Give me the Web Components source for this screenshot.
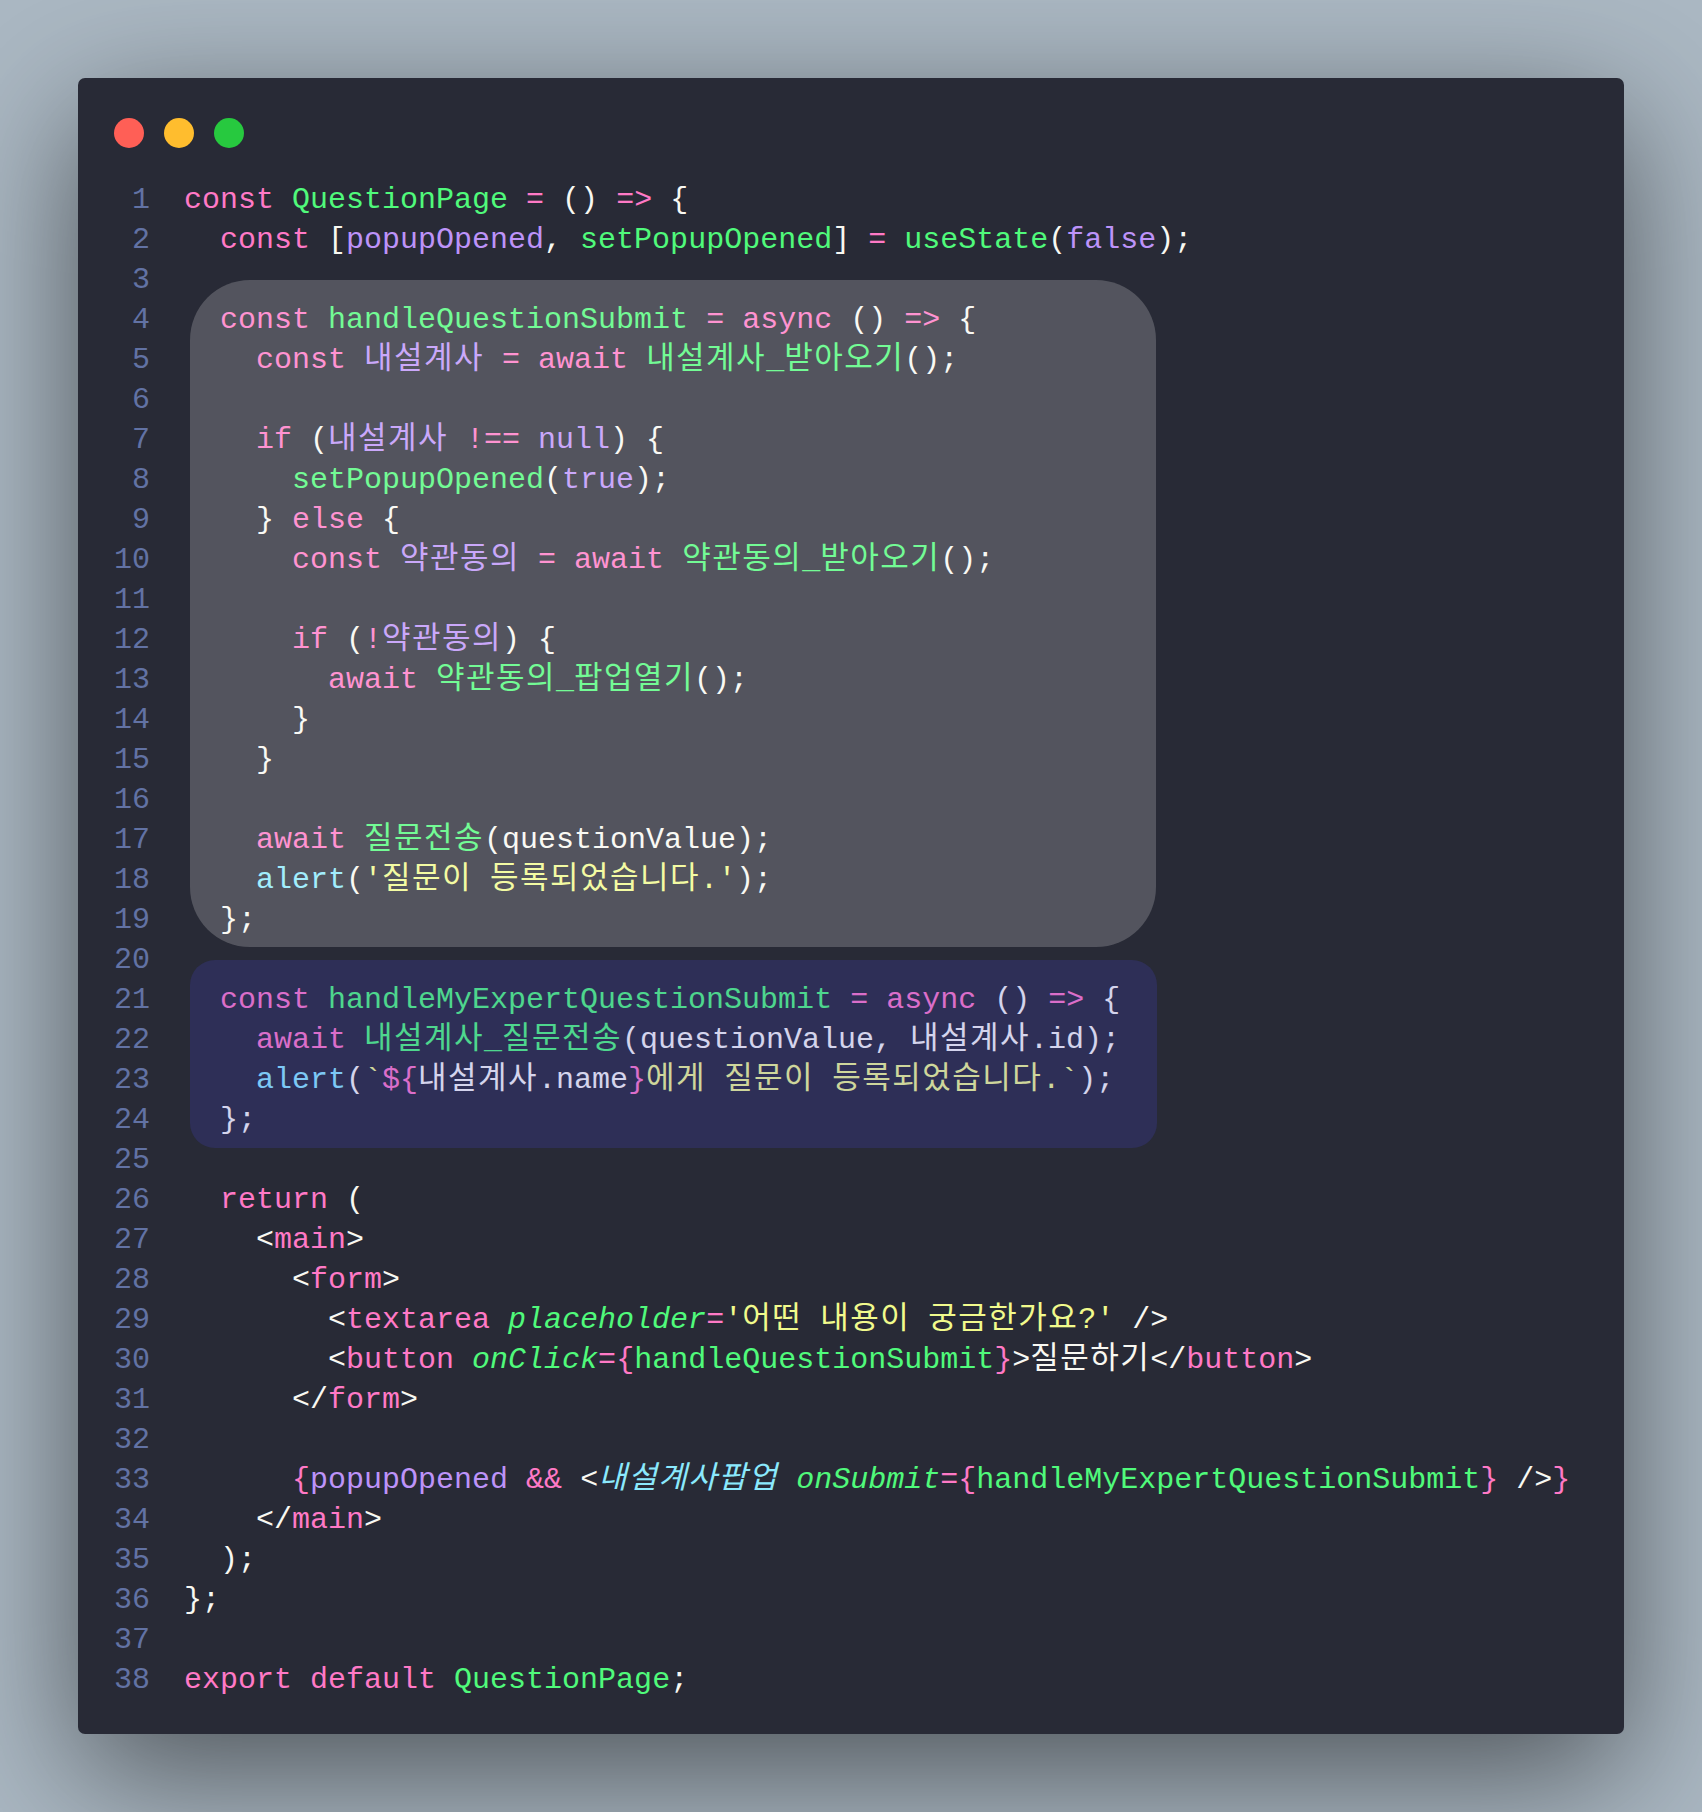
<!DOCTYPE html>
<html lang="ko">
<head>
<meta charset="utf-8">
<title>QuestionPage</title>
<style>
html, body { margin: 0; background: #abb8c3; }
</style>
</head>
<body>
<code-shot></code-shot>
<script>
// «x|text» = token of class x, everything else is plain (white)
const SOURCE = [
  "«k|const» «f|QuestionPage» «k|=» () «k|=>» {",
  "  «k|const» [«v|popupOpened», «f|setPopupOpened»] «k|=» «f|useState»(«v|false»);",
  "",
  "  «k|const» «f|handleQuestionSubmit» «k|=» «k|async» () «k|=>» {",
  "    «k|const» «v|내설계사» «k|=» «k|await» «f|내설계사_받아오기»();",
  "",
  "    «k|if» («v|내설계사» «k|!==» «v|null») {",
  "      «f|setPopupOpened»(«v|true»);",
  "    } «k|else» {",
  "      «k|const» «v|약관동의» «k|=» «k|await» «f|약관동의_받아오기»();",
  "",
  "      «k|if» («k|!»«v|약관동의») {",
  "        «k|await» «f|약관동의_팝업열기»();",
  "      }",
  "    }",
  "",
  "    «k|await» «f|질문전송»(questionValue);",
  "    «c|alert»(«s|'질문이 등록되었습니다.'»);",
  "  };",
  "",
  "  «k|const» «f|handleMyExpertQuestionSubmit» «k|=» «k|async» () «k|=>» {",
  "    «k|await» «f|내설계사_질문전송»(questionValue, 내설계사.id);",
  "    «c|alert»(«s|`»«k|${»내설계사.name«k|}»«s|에게 질문이 등록되었습니다.`»);",
  "  };",
  "",
  "  «k|return» (",
  "    <«k|main»>",
  "      <«k|form»>",
  "        <«k|textarea» «a|placeholder»«k|=»«s|'어떤 내용이 궁금한가요?'» />",
  "        <«k|button» «a|onClick»«k|=»«k|{»«f|handleQuestionSubmit»«k|}»>질문하기</«k|button»>",
  "      </«k|form»>",
  "",
  "      «k|{»«v|popupOpened» «k|&&» <«t|내설계사팝업» «a|onSubmit»«k|=»«k|{»«f|handleMyExpertQuestionSubmit»«k|}» />«k|}»",
  "    </«k|main»>",
  "  );",
  "};",
  "",
  "«k|export» «k|default» «f|QuestionPage»;"
]

class TrafficLights extends HTMLElement {
  constructor() {
    super()
    this.attachShadow({mode: "open"}).innerHTML = `
      <style>
      :host { display: flex; gap: 20px; }
      i { display: block; width: 30px; height: 30px; border-radius: 50%; }
      </style>
      <i style="background:#ff5f56"></i>
      <i style="background:#ffbd2e"></i>
      <i style="background:#27c93f"></i>
    `
  }
}

class CodeMark extends HTMLElement {
  constructor() {
    super()
    this.attachShadow({mode: "open"}).innerHTML = `
      <style>
      :host {
        display: block;
        position: absolute;
        pointer-events: none;
        top: var(--top);
        left: 6px;
        width: var(--width);
        height: var(--height);
        border-radius: var(--radius);
        background: var(--tint);
      }
      </style>
    `
  }
}

class CodeBlock extends HTMLElement {
  constructor() {
    super()
    this.attachShadow({mode: "open"})
  }

  connectedCallback() {
    this.render()
  }

  token(cls, text) {
    const html = text
      .replace(/&/g, "&amp;")
      .replace(/</g, "&lt;")
      .replace(/>/g, "&gt;")
      .replace(/[\uac00-\ud7a3]+/g, m => `<span class="ko">${m}</span>`)
    return cls ? `<span class="${cls}">${html}</span>` : html
  }

  line(src) {
    let out = ""
    let rest = src
    const re = /«(\w)\|(.*?)»/
    let m
    while ((m = re.exec(rest))) {
      out += this.token("", rest.slice(0, m.index)) + this.token(m[1], m[2])
      rest = rest.slice(m.index + m[0].length)
    }
    return out + this.token("", rest)
  }

  render() {
    this.shadowRoot.innerHTML = `
      <style>
      :host {
        display: grid;
        grid-template-columns: 36px 1fr;
        column-gap: 34px;
        position: relative;
        font: 30px/40px "Liberation Mono", "Noto Sans CJK KR", monospace;
        color: #f8f8f2;
        white-space: pre;
      }
      .num { color: #6272a4; text-align: right; }
      .code { position: relative; height: 40px; }
      .ko {
        font-size: 31px;
        line-height: 0;
        letter-spacing: 1.48px;
      }
      .k { color: #ff79c6; }
      .f { color: #50fa7b; }
      .v { color: #bd93f9; }
      .s { color: #f1fa8c; }
      .c { color: #8be9fd; }
      .t { color: #8be9fd; font-style: italic; }
      .a { color: #50fa7b; font-style: italic; }
      .marks { position: absolute; left: 70px; top: 0; }
      </style>
      ${SOURCE.map((src, i) => `
        <div class="num">${i + 1}</div>
        <div class="code">${this.line(src)}</div>
      `).join("")}
      <div class="marks">
        <code-mark style="--top:100px;--width:966px;--height:667px;--radius:60px;--tint:rgba(255,255,255,.2)"></code-mark>
        <code-mark style="--top:780px;--width:967px;--height:188px;--radius:25px;--tint:rgba(70,70,220,.2)"></code-mark>
      </div>
    `
  }
}

class CodeWindow extends HTMLElement {
  constructor() {
    super()
    this.attachShadow({mode: "open"}).innerHTML = `
      <style>
      :host {
        display: flex;
        flex-direction: column;
        gap: 32px;
        padding: 40px 36px 38px;
        height: 1656px;
        box-sizing: border-box;
        background: #282a36;
        border-radius: 7px;
        box-shadow: 0 40px 136px rgba(0, 0, 0, .55);
      }
      </style>
      <traffic-lights></traffic-lights>
      <code-block></code-block>
    `
  }
}

class CodeShot extends HTMLElement {
  constructor() {
    super()
    this.attachShadow({mode: "open"}).innerHTML = `
      <style>
      :host {
        display: block;
        height: 1812px;
        padding: 78px 78px 0;
        box-sizing: border-box;
        background: #abb8c3;
        overflow: hidden;
      }
      </style>
      <code-window></code-window>
    `
  }
}

customElements.define("traffic-lights", TrafficLights)
customElements.define("code-mark", CodeMark)
customElements.define("code-block", CodeBlock)
customElements.define("code-window", CodeWindow)
customElements.define("code-shot", CodeShot)
</script>
</body>
</html>
